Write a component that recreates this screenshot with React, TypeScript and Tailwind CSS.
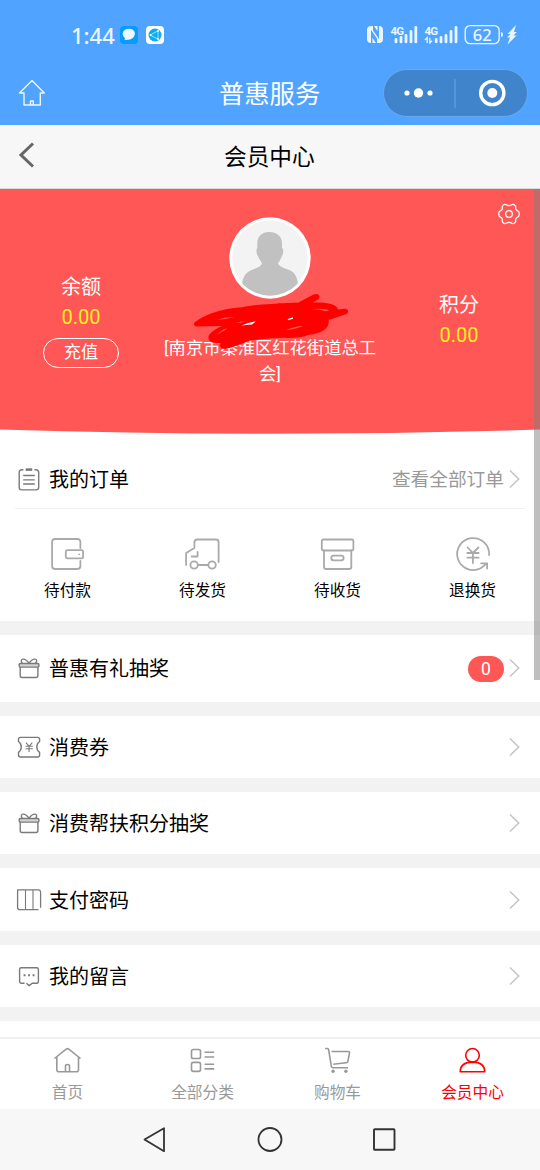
import type { ReactNode } from "react";

const Chevron = () => (
  <svg viewBox="0 0 11 20" className="h-5 w-[11px] shrink-0" fill="none" stroke="#c6c6ca" strokeWidth="1.6">
    <path d="M1 1.5 L9.7 10 L1 18.5" />
  </svg>
);

const ListIcon = ({ children }: { children: ReactNode }) => (
  <svg viewBox="0 0 26 26" className="h-[26px] w-[26px] shrink-0" fill="none" stroke="#7a7a7a" strokeWidth="1.4" strokeLinejoin="round">
    {children}
  </svg>
);

const Clipboard = () => (
  <ListIcon>
    <path d="M7.5 3.8 H5.8 Q3.2 3.8 3.2 6.4 V21.3 Q3.2 23.9 5.8 23.9 H20 Q22.7 23.9 22.7 21.3 V6.4 Q22.7 3.8 20 3.8 H18.4" />
    <path d="M9.7 3.6 H16.2" strokeWidth="2.6" />
    <path d="M7.2 9.5 H18.8 M7.2 13.8 H18.8 M7.2 18 H18.8" strokeWidth="1.3" />
  </ListIcon>
);

const Gift = () => (
  <ListIcon>
    <rect x="3.2" y="8.5" width="19.7" height="3.6" rx="1" fill="#d4d4d4" />
    <path d="M4.2 12.1 V20.6 Q4.2 22.5 6 22.5 H20 Q21.9 22.5 21.9 20.6 V12.1" />
    <path d="M13 8.3 C11 5.2 8.8 3.9 6.8 4.1 C4.8 4.4 5 6.9 6.4 8.3 M13 8.3 C15 5.2 17.2 3.9 19.2 4.1 C21.2 4.4 21 6.9 19.6 8.3" />
  </ListIcon>
);

const Coupon = () => (
  <ListIcon>
    <path d="M4.6 3.4 H21.5 Q23.6 3.4 23.6 5.3 V7.5 Q20.8 9.5 20.8 13 Q20.8 16.4 23.6 18.4 V21 Q23.6 23 21.5 23 H4.6 Q2.5 23 2.5 21 V18.4 Q5.3 16.4 5.3 13 Q5.3 9.5 2.5 7.5 V5.3 Q2.5 3.4 4.6 3.4 Z" />
    <path d="M10 8.7 L13.1 12.3 L16.3 8.7 M13.1 12.3 V18 M9.5 12.3 H16.8 M9.5 14.8 H16.8" strokeWidth="1.1" />
  </ListIcon>
);

const Columns = () => (
  <ListIcon>
    <path d="M22.5 22.7 H4 Q1.6 22.7 1.6 20.5 V2.9 H22.8 Q24.6 3.4 24.6 5.2 V20.8" strokeWidth="1.3" />
    <path d="M9.5 2.9 V22.7 M17 2.9 V22.7" strokeWidth="1.1" />
  </ListIcon>
);

const Message = () => (
  <ListIcon>
    <path d="M8.5 20.2 H5.2 Q3.6 20 3.6 18.4 V6.3 Q3.6 4.7 5.2 4.7 H20.8 Q22.4 4.7 22.4 6.3 V18.4 Q22.4 20.2 20.8 20.2 H16.2 L13.2 22.6 L10.3 20.2" />
    <path d="M7.6 12.2 H9.5 M12.1 12.2 H14 M16.6 12.2 H18.5" strokeWidth="1.9" />
  </ListIcon>
);

const Order = ({ label, children }: { label: string; children: ReactNode }) => (
  <div className="flex w-[135px] flex-col items-center">
    <svg viewBox="0.9 0 40 40" className="h-10 w-10" fill="none" stroke="#aaaaaa" strokeWidth="1.8" strokeLinecap="round" strokeLinejoin="round">
      {children}
    </svg>
    <span className="mt-[5px] text-[15.7px] leading-6">{label}</span>
  </div>
);

const Row = ({ icon, label, tall, badge }: { icon: ReactNode; label: string; tall?: boolean; badge?: string }) => (
  <div
    className={
      tall
        ? "flex h-[80.7px] items-center border-b-[14px] border-[#f2f2f2] pl-4 pr-5"
        : "flex h-[76.4px] items-center border-b-[14px] border-[#f2f2f2] pl-4 pr-5"
    }
  >
    {icon}
    <span className="ml-[7px] grow pt-0.5 text-[20px] leading-7">{label}</span>
    {badge && (
      <span className="mr-[5px] mt-0.5 flex h-[26px] w-9 items-center justify-center rounded-full bg-[#ff5656] text-[17.5px] leading-none text-white">
        {badge}
      </span>
    )}
    <Chevron />
  </div>
);

const Tab = ({ label, active, children }: { label: string; active?: boolean; children: ReactNode }) => (
  <div className={active ? "flex w-[135px] flex-col items-center text-[#ff0000]" : "flex w-[135px] flex-col items-center text-[#999999]"}>
    <svg viewBox="0.5 0.5 30 30" className="mt-[7px] h-[30px] w-[30px]" fill="none" stroke="currentColor" strokeWidth="1.6" strokeLinejoin="round">
      {children}
    </svg>
    <span className="mt-[5px] text-[15.7px] leading-6">{label}</span>
  </div>
);

const Person = () => (
  <svg viewBox="0 0 82 82" className="h-[82px] w-[82px]">
    <defs>
      <clipPath id="avatar">
        <circle cx="41" cy="41" r="37.7" />
      </clipPath>
    </defs>
    <circle cx="41" cy="41" r="40.7" fill="#fff" />
    <circle cx="41" cy="41" r="37.7" fill="#f3f3f3" />
    <path
      clipPath="url(#avatar)"
      fill="#c1c1c1"
      d="M40 15 C47 14.7 53 19 53 26 L53 31 C55 32 54.5 37 52.5 40 C51.8 42.5 49.6 45 49 46.7 C50.5 49.3 55 51.2 61 53.2 C66 55.3 68.5 61 69 67 L69 82 H13 V67 C14 60 16.5 55.5 22 53.2 C27 51.4 31 50 33 46.7 C32 43.5 30 42.5 29.4 40 C27.5 37 26.7 32.5 28.3 31 L28.3 26 C28.5 20 32 15 40 15 Z"
    />
  </svg>
);

const Scribble = () => (
  <svg viewBox="0 0 160 60" className="absolute left-[191px] top-[102px] h-[60px] w-40" fill="none" strokeLinecap="round" strokeLinejoin="round">
    <path
      fill="#ff0000"
      d="M4.5 30.8 C9 27 15 24.5 20.7 22.3 C30 19 40 17.2 50.7 16.3 C60 14 70 13.3 80.7 13 C91 11.8 101 11.8 107 11.7 L122.5 3.6 C126 1.5 130.5 4.5 127.7 8 L121.5 11.7 C130 11.3 136 12 140.7 13.3 C144.5 14.5 146.5 16.2 147 18.4 L153.5 17.7 C157.5 17.3 158.3 21.5 155.5 23 C149.5 25 144 27 137.8 28.8 C137.8 33 137 36 134 38.3 C130 41.5 124 43.2 117.3 44 C109 47 101 47.3 94 46.7 C83 46.5 72 48.5 60.7 49 C52 52 44.5 55.5 37.3 57.3 C33.5 58.7 29.5 57.8 28.8 55 C28.6 53.5 29.3 53 30 52 C25.5 52.2 21.5 52.5 19 50.3 C16.8 47.5 17 45 19 42.7 C22 39.5 26 37.3 30.7 35 L6 35.5 C2.4 35.3 2.2 32.4 4.5 30.8 Z"
    />
    <path d="M26 28.8 Q34 25.8 43 26 Q34 28.8 26 28.8 Z M27 43.5 Q29 39 36 37.3 L34.5 39 Q30 40.5 27 43.5 Z M120 18.3 Q130 17 138 19 Q137 20.3 134 20.3 Q130 18.4 120 18.3 Z M95 39.3 Q103 35.2 112 35 Q106 37.8 95 39.3 Z M44 32 L55 29.8 L50 31.8 Z" fill="#ff5656" />
    <path d="M50 34.8 L57 32 L65 30.3 L61 33.4 L55 34 Z M96.8 28 L102 26.3 L102 27.8 L97 29.2 Z" fill="#fff" />
  </svg>
);

const StatusBar = () => (
  <div className="flex h-[68px] items-start pl-[71px] pr-[23px] text-white">
    <span className="mt-[21px] w-[49px] font-['Noto_Sans','Noto_Sans_CJK_SC',sans-serif] text-[22px] font-medium leading-7 text-[#eaf5ff]">1:44</span>
    <svg viewBox="0 0 46 20" className="mt-[25px] h-5 w-[46px]">
      <rect y="1" width="18" height="18" rx="4" fill="#079cf7" />
      <path d="M4.5 14.8 L5 13 C0.5 9.5 3 3.7 9 3.7 C15.5 3.7 16.5 10 12.8 13 Q10 15.3 4.5 14.8Z" fill="#eaf9ff" />
      <rect x="26" y="1" width="18" height="18" rx="4" fill="#fff" />
      <circle cx="35" cy="10" r="6.5" fill="#08adf2" />
      <path d="M30.2 10 L38 5.8 V14.2 Z" fill="none" stroke="#c5efff" strokeWidth=".8" />
      <circle cx="38" cy="6" r=".9" fill="#fff" />
      <circle cx="38" cy="14" r=".9" fill="#fff" />
      <circle cx="30.5" cy="10" r=".9" fill="#fff" />
    </svg>
    <svg viewBox="0 0 156 24" className="ml-auto mt-[23px] h-6 w-[156px]" fill="#eaf5ff">
      <rect x="6" y="3" width="16" height="17" rx="4" />
      <path d="M10 20 V7 L16 15.5 V20 H15 L11.4 14.7 V20Z M18 3 V16 L12 7.5 V3 H13 L16.6 8.3 V3Z" fill="#50a4ff" />
      <g fontFamily="Roboto, sans-serif" fontSize="11.5" fontWeight="700">
        <text x="29.5" y="11.8" textLength="13.5">4G</text>
        <text x="63.5" y="11.8" textLength="13.5">4G</text>
      </g>
      <path d="M35 18.9 V16.5 M40 18.9 V14.5 M45 18.9 V12.3 M50 18.9 V8.5 M54.8 18.9 V4.5 M75.2 18.9 V16.5 M80 18.9 V14.5 M85 18.9 V12.3 M90 18.9 V8.5 M95 18.9 V4.5" stroke="#eaf5ff" strokeWidth="2.8" strokeLinecap="round" />
      <path d="M64 17 L66.2 14.7 V20 M68.8 14.7 V20 L71 17.7" fill="none" stroke="#eaf5ff" strokeWidth="1.3" />
      <rect x="104.2" y="2.6" width="34" height="18" rx="5" fill="none" stroke="#eaf5ff" strokeWidth="1.4" />
      <path d="M140 9 Q142 9 142 11.5 Q142 14 140 14Z" />
      <text x="111.8" y="17.6" fontFamily="Noto Sans, sans-serif" fontSize="16.5" fontWeight="500" textLength="19">62</text>
      <path d="M155 2 L146.5 11 H149.5 L146 14.5 H149 L146.5 21.5 L155.5 12.5 H152.5 L155.8 9 H153Z" />
    </svg>
  </div>
);

export default function App() {
  return (
    <div className="relative flex h-[1170px] w-[540px] flex-col overflow-hidden bg-white font-['Roboto','Noto_Sans_CJK_SC',sans-serif] text-black">
      <header className="h-[125px] shrink-0 bg-[#50a4ff]">
        <StatusBar />
        <div className="flex h-[50px] items-center pl-[18px] pr-3 text-white">
          <div className="w-[201px]">
            <svg viewBox="0 0 28 28" className="h-7 w-7" fill="none" stroke="#edf6ff" strokeWidth="1.4" strokeLinejoin="round">
              <path d="M14 1.5 L26.3 14 H22.3 V26 H6 V14 H1.5 Z M12.5 26 V22 H15.3 V26" />
            </svg>
          </div>
          <h1 className="pt-[3px] text-[25.3px] leading-9">普惠服务</h1>
          <div className="ml-auto flex h-12 w-[145px] items-center rounded-full border border-[#68a9ef] bg-[#4085cc]">
            <svg viewBox="0 0 142 46" className="h-[46px] w-[142px]" fill="#fff">
              <circle cx="23" cy="23" r="2.6" />
              <circle cx="34.5" cy="23" r="4.7" />
              <circle cx="46" cy="23" r="2.6" />
              <path d="M71 9 V38" stroke="#69a7e8" />
              <circle cx="108.3" cy="23" r="11.6" fill="none" stroke="#fff" strokeWidth="3.4" />
              <circle cx="108.3" cy="23" r="5" />
            </svg>
          </div>
        </div>
      </header>

      <div className="flex h-16 shrink-0 items-center border-b border-[#dadada] bg-[#f7f7f7] pl-4">
        <svg viewBox="0 0 24 32" className="mb-1 h-8 w-6" fill="none" stroke="#666" strokeWidth="3">
          <path d="M17 4.5 L5 16 L17 27.5" />
        </svg>
        <h2 className="ml-[184px] pt-0.5 text-[22.7px] leading-8">会员中心</h2>
      </div>

      <section className="relative h-[245px] shrink-0 text-white">
        <svg viewBox="0 0 540 245" className="absolute inset-0 h-[245px] w-[540px]">
          <path d="M0 0 H540 V240.5 Q270 249 0 240.5Z" fill="#ff5656" />
        </svg>
        <div className="relative flex">
          <div className="flex w-[162px] flex-col items-center pt-[83px]">
            <span className="text-[20px] leading-[30px]">余额</span>
            <span className="text-[20px] leading-[30px] text-[#fff01f]">0.00</span>
            <button className="mt-[6px] flex h-[30px] w-[76px] items-center justify-center rounded-full border-[1.5px] border-white pb-0.5 text-[17.3px] leading-6">充值</button>
          </div>
          <div className="flex w-[216px] flex-col items-center pt-7">
            <Person />
            <p className="mt-9 w-[216px] text-center text-[17.3px] leading-[26px]">
              [南京市秦淮区红花街道总工
              <br />
              会]
            </p>
          </div>
          <div className="flex w-[162px] flex-col items-center pt-[101px]">
            <span className="text-[20px] leading-[30px]">积分</span>
            <span className="text-[20px] leading-[30px] text-[#fff01f]">0.00</span>
          </div>
        </div>
        <Scribble />
        <svg viewBox="0 0 24 24" className="absolute right-[19px] top-[13px] h-6 w-6" fill="none" stroke="#fff" strokeWidth="1.3" strokeLinejoin="round">
          <path d="M9.2 2.8 Q12 4.4 14.8 2.8 Q16.5 1.8 18 3.4 Q19 4.4 18.6 6 Q18.5 7.8 20.3 8.7 Q22.2 9.4 22.2 11 V13 Q22.2 14.6 20.3 15.3 Q18.5 16.2 18.6 18 Q19 19.6 18 20.6 Q16.5 22.2 14.8 21.2 Q12 19.6 9.2 21.2 Q7.5 22.2 6 20.6 Q5 19.6 5.4 18 Q5.5 16.2 3.7 15.3 Q1.8 14.6 1.8 13 V11 Q1.8 9.4 3.7 8.7 Q5.5 7.8 5.4 6 Q5 4.4 6 3.4 Q7.5 1.8 9.2 2.8 Z" />
          <circle cx="12" cy="12" r="3.3" />
        </svg>
      </section>

      <section className="h-[201px] shrink-0 border-b-[14px] border-[#f2f2f2]">
        <div className="mx-[15px] flex h-[75px] items-center border-b border-[#f0f0f0] pl-px pr-[5px] pt-4">
          <Clipboard />
          <span className="ml-[7px] grow pt-0.5 text-[20px] leading-7">我的订单</span>
          <span className="mr-[5px] pt-0.5 text-[18.7px] leading-7 text-[#999999]">查看全部订单</span>
          <Chevron />
        </div>
        <div className="flex pt-[25px]">
          <Order label="待付款">
            <path d="M33.3 14 V8.5 Q33.3 5 30 5 H8 Q5 5 5 8 V32 Q5 35 8 35 H30 Q33.3 35 33.3 32 V27" />
            <rect x="18.7" y="16.2" width="17.3" height="8.2" rx="1.5" />
            <path d="M32 20.3 h.1" />
          </Order>
          <Order label="待发货">
            <path d="M4 31 V19 L12.3 14 V8.5 Q12.3 5.5 15.3 5.5 H34 Q36.5 5.5 36.5 8.5 V28 M15.5 18 V22.5 H9.5 M16 31 H25.5" />
            <circle cx="12" cy="31" r="3.7" />
            <circle cx="30" cy="31" r="3.7" />
          </Order>
          <Order label="待收货">
            <rect x="4.7" y="5.5" width="31.6" height="11" rx="1.5" />
            <path d="M6.9 16.5 V33 Q6.9 35 8.9 35 H32.1 Q34.2 35 34.2 33 V16.5" />
            <rect x="14.2" y="21.7" width="12.3" height="4.6" rx="2.3" />
          </Order>
          <Order label="退换货">
            <path d="M37 21 A16 16 0 1 0 28.5 34.2 Q31.5 32.3 34.5 29.3 M29 29.3 H35 V34.5 M15.5 13.5 L20.8 19 L26.3 13.5 M20.8 19 V29 M15.2 19 H26.5 M15.2 23.7 H26.5" />
          </Order>
        </div>
      </section>

      <main className="h-[402px] shrink-0 overflow-hidden">
        <Row icon={<Gift />} label="普惠有礼抽奖" badge="0" tall />
        <Row icon={<Coupon />} label="消费券" />
        <Row icon={<Gift />} label="消费帮扶积分抽奖" />
        <Row icon={<Columns />} label="支付密码" />
        <Row icon={<Message />} label="我的留言" />
      </main>

      <nav className="flex h-[72px] shrink-0 border-t-2 border-[#f0f0f0] bg-white">
        <Tab label="首页">
          <path d="M2 13 L13.7 3.6 Q15 2.7 16.3 3.6 L28 13 M4.3 11.5 V24 Q4.3 26.3 6.5 26.3 H23.8 Q26 26.3 26 24 V11.5 M13 26 V20.5 Q13 19 15 19 Q17 19 17 20.5 V26" />
        </Tab>
        <Tab label="全部分类">
          <rect x="4" y="4" width="9" height="9" rx="1.8" />
          <rect x="4" y="16.9" width="9" height="9" rx="1.8" />
          <path d="M17 6.8 H26.7 M17 11.5 H26.7 M17 18.8 H26.7 M17 23.4 H26.7" />
        </Tab>
        <Tab label="购物车">
          <path d="M2.6 3 H4.8 Q6 3 6.2 4.5 L8.8 20.7 Q9 22.3 10.5 22.3 H25.5 M9 6 H25.5 Q27.2 6 27 7.5 L25.4 15.8 Q25.2 17.2 23.5 17.3 L10.7 18.8" />
          <circle cx="10.6" cy="25.8" r="1.7" fill="currentColor" stroke="none" />
          <circle cx="23.4" cy="25.8" r="1.7" fill="currentColor" stroke="none" />
        </Tab>
        <Tab label="会员中心" active>
          <circle cx="15" cy="9.8" r="6.8" />
          <path d="M2.7 26.2 Q2.7 16.8 15 16.6 Q27.3 16.8 27.3 26.2 Z" />
        </Tab>
      </nav>

      <footer className="flex h-[61px] shrink-0 items-center justify-center gap-[85px] bg-[#f7f7f7]">
        <svg viewBox="0.5 0.5 30 30" className="h-[30px] w-[30px]" fill="none" stroke="#333" strokeWidth="1.8" strokeLinejoin="round">
          <path d="M5 15 L24.5 3.7 V26.7 Z" />
        </svg>
        <svg viewBox="0 0.5 30 30" className="h-[30px] w-[30px]" fill="none" stroke="#333" strokeWidth="1.8">
          <circle cx="15" cy="15" r="11.5" />
        </svg>
        <svg viewBox="0 0.5 30 30" className="h-[30px] w-[30px]" fill="none" stroke="#333" strokeWidth="1.9">
          <rect x="4" y="4.8" width="20.5" height="20.5" rx="0.8" />
        </svg>
      </footer>

      <div className="absolute right-0 top-[189px] h-[491px] w-1.5 bg-[#808080]/50" />
    </div>
  );
}
